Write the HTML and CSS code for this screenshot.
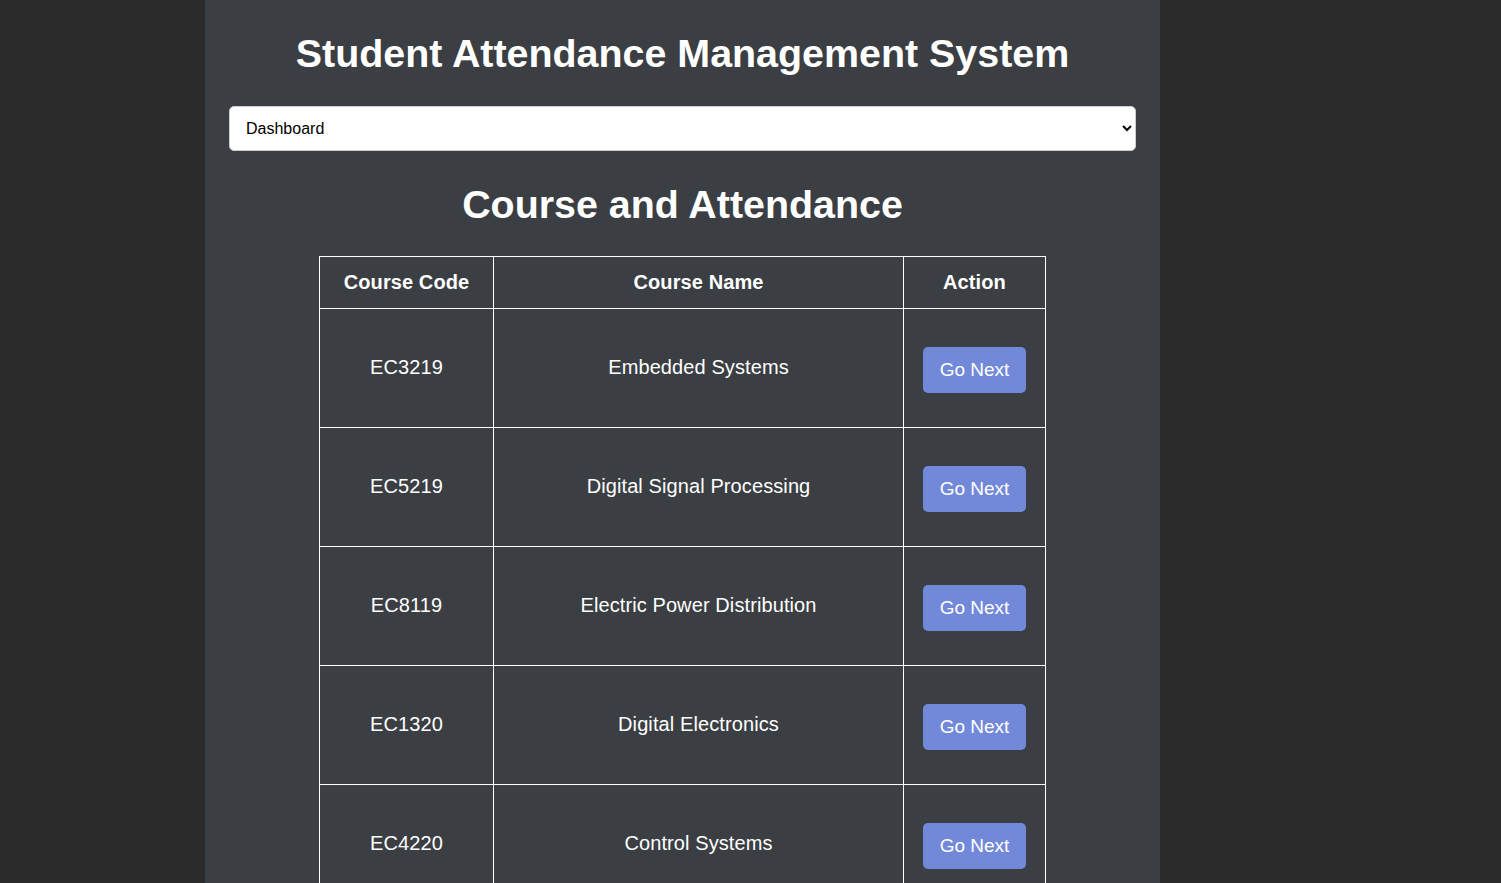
FILE: index.html
```html
<!DOCTYPE html>
<html lang="en">
<head>
<meta charset="utf-8">
<title>Student Attendance Management System</title>
<link rel="stylesheet" href="styles.css">
</head>
<body>
<div class="container">
  <h1 class="title">Student Attendance Management System</h1>
  <select class="nav-select">
    <option>Dashboard</option>
    <option>Courses</option>
    <option>Attendance</option>
  </select>
  <h2 class="subtitle">Course and Attendance</h2>
  <table class="course-table">
    <colgroup>
      <col class="col-code">
      <col class="col-name">
      <col class="col-action">
    </colgroup>
    <thead>
      <tr><th>Course Code</th><th>Course Name</th><th>Action</th></tr>
    </thead>
    <tbody>
      <tr><td>EC3219</td><td>Embedded Systems</td><td><button class="btn">Go Next</button></td></tr>
      <tr><td>EC5219</td><td>Digital Signal Processing</td><td><button class="btn">Go Next</button></td></tr>
      <tr><td>EC8119</td><td>Electric Power Distribution</td><td><button class="btn">Go Next</button></td></tr>
      <tr><td>EC1320</td><td>Digital Electronics</td><td><button class="btn">Go Next</button></td></tr>
      <tr><td>EC4220</td><td>Control Systems</td><td><button class="btn">Go Next</button></td></tr>
    </tbody>
  </table>
</div>
</body>
</html>
```

FILE: styles.css
```css
html, body {
  margin: 0;
  padding: 0;
}
body {
  background: #2b2b2b;
  font-family: "Liberation Sans", Arial, sans-serif;
  color: #ffffff;
}
.container {
  width: 907px;
  margin-left: 205px;
  padding: 30px 24px 40px;
  background: #3b3e42;
  min-height: 100vh;
}
.title {
  margin: 0 0 30px;
  font-size: 39.4px;
  font-weight: bold;
  text-align: center;
  line-height: 46px;
}
.nav-select {
  display: block;
  width: 100%;
  height: 45px;
  padding: 0 16px 0 12px;
  font-family: "Liberation Sans", Arial, sans-serif;
  font-size: 16px;
  color: #000;
  background: #ffffff;
  border: 1px solid #cccccc;
  border-radius: 5px;
  box-sizing: border-box;
}
.subtitle {
  margin: 30px 0 29px;
  font-size: 39.4px;
  font-weight: bold;
  text-align: center;
  line-height: 46px;
}
.course-table {
  width: 726px;
  margin: 0 auto;
  border-collapse: collapse;
  table-layout: fixed;
}
.col-code { width: 174px; }
.col-name { width: 410px; }
.col-action { width: 142px; }
.course-table th,
.course-table td {
  border: 1px solid #ffffff;
  text-align: center;
  vertical-align: middle;
  font-size: 20px;
  letter-spacing: 0.1px;
}
.course-table th {
  height: 51px;
  padding: 0 10px;
  font-weight: bold;
}
.course-table td {
  height: 119px;
  padding: 0 10px 2px;
  box-sizing: border-box;
}
.btn {
  margin-top: 5px;
  padding: 12px 17px;
  font-family: "Liberation Sans", Arial, sans-serif;
  font-size: 19px;
  line-height: 22px;
  color: #ffffff;
  background: #7289da;
  border: none;
  border-radius: 5px;
  cursor: pointer;
}
```
